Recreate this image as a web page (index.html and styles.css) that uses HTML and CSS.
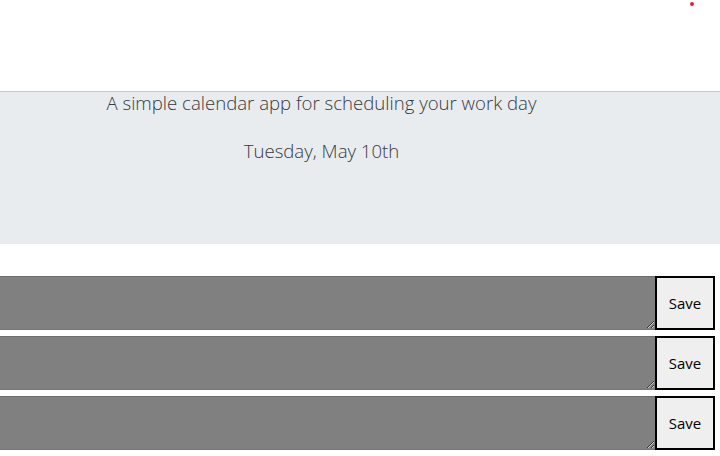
FILE: index.html
```html
<!DOCTYPE html>
<html lang="en">
<head>
<meta charset="utf-8">
<title>Work Day Scheduler</title>
<link rel="stylesheet" href="styles.css">
</head>
<body>
<header class="top">
  <span class="dot"></span>
</header>
<section class="jumbotron">
  <div class="intro">
    <p class="lead">A simple calendar app for scheduling your work day</p>
    <p class="lead" id="currentDay">Tuesday, May 10th</p>
  </div>
</section>
<main class="planner">
  <div class="time-block">
    <textarea class="description"></textarea>
    <button class="saveBtn">Save</button>
  </div>
  <div class="time-block">
    <textarea class="description"></textarea>
    <button class="saveBtn">Save</button>
  </div>
  <div class="time-block">
    <textarea class="description"></textarea>
    <button class="saveBtn">Save</button>
  </div>
</main>
</body>
</html>
```
FILE: styles.css
```css
html, body {
  margin: 0;
  padding: 0;
  background: #fff;
  font-family: "Open Sans", "Segoe UI", sans-serif;
  color: #212529;
  overflow: hidden;
}

.top {
  height: 91px;
  position: relative;
}

.dot {
  position: absolute;
  left: 690px;
  top: 2px;
  width: 4px;
  height: 4px;
  border-radius: 50%;
  background: #ee1c24;
}

.jumbotron {
  background: #e9ecef;
  border-top: 1px solid #c9c9c9;
  height: 152px;
  box-sizing: content-box;
}

.intro {
  width: 643px;
  text-align: center;
}

.lead {
  margin: 0 0 27px;
  font-size: 18.6px;
  font-weight: 300;
  line-height: 21px;
  color: #353a40;
}

.planner {
  margin-top: 32px;
  display: flex;
  flex-direction: column;
  gap: 6px;
  padding-right: 5px;
}

.time-block {
  display: flex;
  height: 54px;
}

.description {
  flex: 1;
  margin: 0;
  padding: 2px;
  height: 54px;
  box-sizing: border-box;
  background: #808080;
  border: 1px solid #767676;
  border-top-color: #6e6e6e;
  border-left: none;
  border-right: none;
  resize: both;
}

.saveBtn {
  width: 60px;
  height: 54px;
  box-sizing: border-box;
  margin: 0;
  background: #efefef;
  border: 2px solid #000;
  font-family: "Open Sans", "Segoe UI", sans-serif;
  font-size: 15px;
  color: #000;
  padding: 0;
}
```
